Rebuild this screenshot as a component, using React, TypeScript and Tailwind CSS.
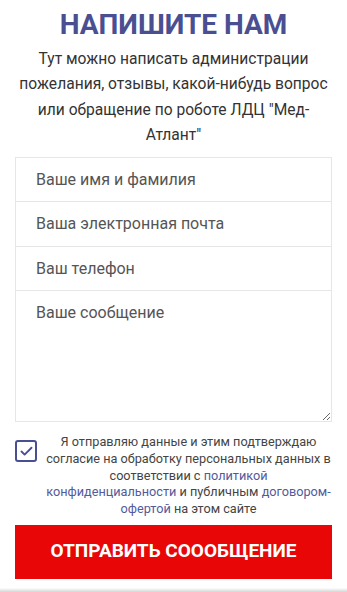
import { Check } from "lucide-react";

const fields = ["Ваше имя и фамилия", "Ваша электронная почта", "Ваш телефон"];

export default function App() {
  return (
    <div className="flex min-h-[592px] w-full flex-col bg-white font-['Roboto',sans-serif]">
      <main className="flex flex-col px-[15px]">
        <h1 className="mt-[8px] text-center text-[28px] font-bold leading-[34px] text-[#4a4f92]">
          НАПИШИТЕ НАМ
        </h1>
        <p className="mt-[5px] text-center text-[15.6px] leading-[25.4px] text-[#333]">
          Тут можно написать администрации пожелания, отзывы, какой-нибудь вопрос или обращение
          по роботе ЛДЦ "Мед-Атлант"
        </p>

        <form className="mt-[8px] flex flex-col">
          {fields.map((label) => (
            <input
              key={label}
              type="text"
              placeholder={label}
              className="h-[44.5px] border-[1.5px] border-b-0 border-[#e6e6e6] px-[20px] text-[16px] text-[#555] outline-none placeholder:text-[#555]"
            />
          ))}
          <textarea
            placeholder="Ваше сообщение"
            className="h-[132px] border-[1.5px] border-[#e6e6e6] px-[20px] pt-[10px] text-[16px] leading-[24px] text-[#555] outline-none placeholder:text-[#555]"
          />

          <label className="mt-[12px] flex items-start gap-[6px]">
            <span className="mt-[6px] flex h-[22px] w-[22px] shrink-0 items-center justify-center rounded-[3px] border-2 border-[#4a4f92]">
              <Check className="h-[15px] w-[15px] text-[#4a4f92]" strokeWidth={3} />
            </span>
            <span className="-mr-[2px] flex-1 text-center text-[12.7px] leading-[16.7px] text-[#444]">
              Я отправляю данные и этим подтверждаю согласие на обработку персональных данных в
              соответствии с <span className="text-[#525a9c]">политикой конфиденциальности</span>{" "}
              и публичным <span className="text-[#525a9c]">договором-офертой</span> на этом сайте
            </span>
          </label>

          <button
            type="button"
            className="mt-[7px] h-[54px] bg-[#e80606] text-[19px] font-bold text-white"
          >
            ОТПРАВИТЬ СОООБЩЕНИЕ
          </button>
        </form>
      </main>
      <div className="mt-auto h-[4px] bg-gradient-to-b from-white to-[#d4d4d4]" />
    </div>
  );
}
